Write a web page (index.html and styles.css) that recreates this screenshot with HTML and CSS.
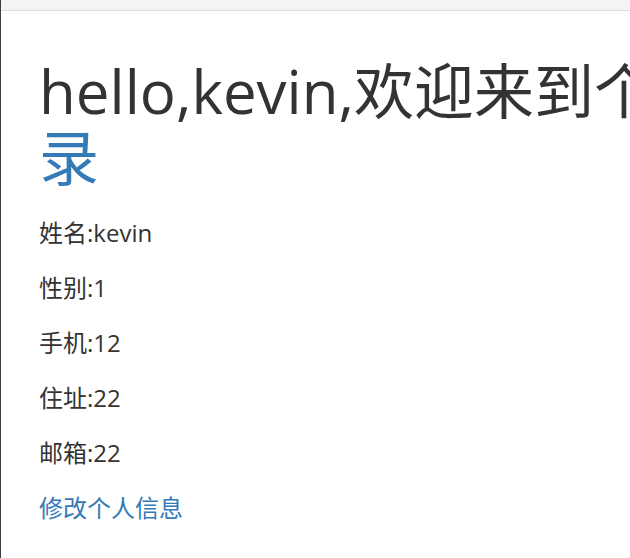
FILE: index.html
```html
<!DOCTYPE html>
<html lang="zh-CN">
<head>
<meta charset="utf-8">
<title>个人中心</title>
<link rel="stylesheet" href="styles.css">
</head>
<body>
<div class="frame">
  <div class="topbar"></div>
  <div class="page">
    <h1 class="title">hello,kevin,欢迎来到个人中心 <a class="link" href="#">退出登录</a></h1>
    <p class="row">姓名:kevin</p>
    <p class="row">性别:1</p>
    <p class="row">手机:12</p>
    <p class="row">住址:22</p>
    <p class="row">邮箱:22</p>
    <p class="row"><a class="link" href="#">修改个人信息</a></p>
  </div>
</div>
</body>
</html>
```

FILE: styles.css
```css
html, body {
  margin: 0;
  padding: 0;
  overflow: hidden;
  background: #fff;
}
body {
  font-family: "Open Sans", "Noto Sans CJK SC", sans-serif;
  color: #333;
  width: 630px;
  height: 558px;
}
.frame {
  border-left: 1px solid #3a3f44;
  height: 558px;
  box-sizing: border-box;
  overflow: hidden;
}
.topbar {
  height: 10px;
  background: #f4f4f4;
  border-bottom: 1px solid #ddd;
}
.page {
  width: 1000px;
  padding: 47px 0 0 38px;
}
.title {
  font-size: 60px;
  font-weight: normal;
  line-height: 67px;
  margin: 0 0 24px;
}
.row {
  font-size: 24px;
  line-height: 33px;
  margin: 0 0 22px;
}
.link {
  color: #337ab7;
  text-decoration: none;
}
```
